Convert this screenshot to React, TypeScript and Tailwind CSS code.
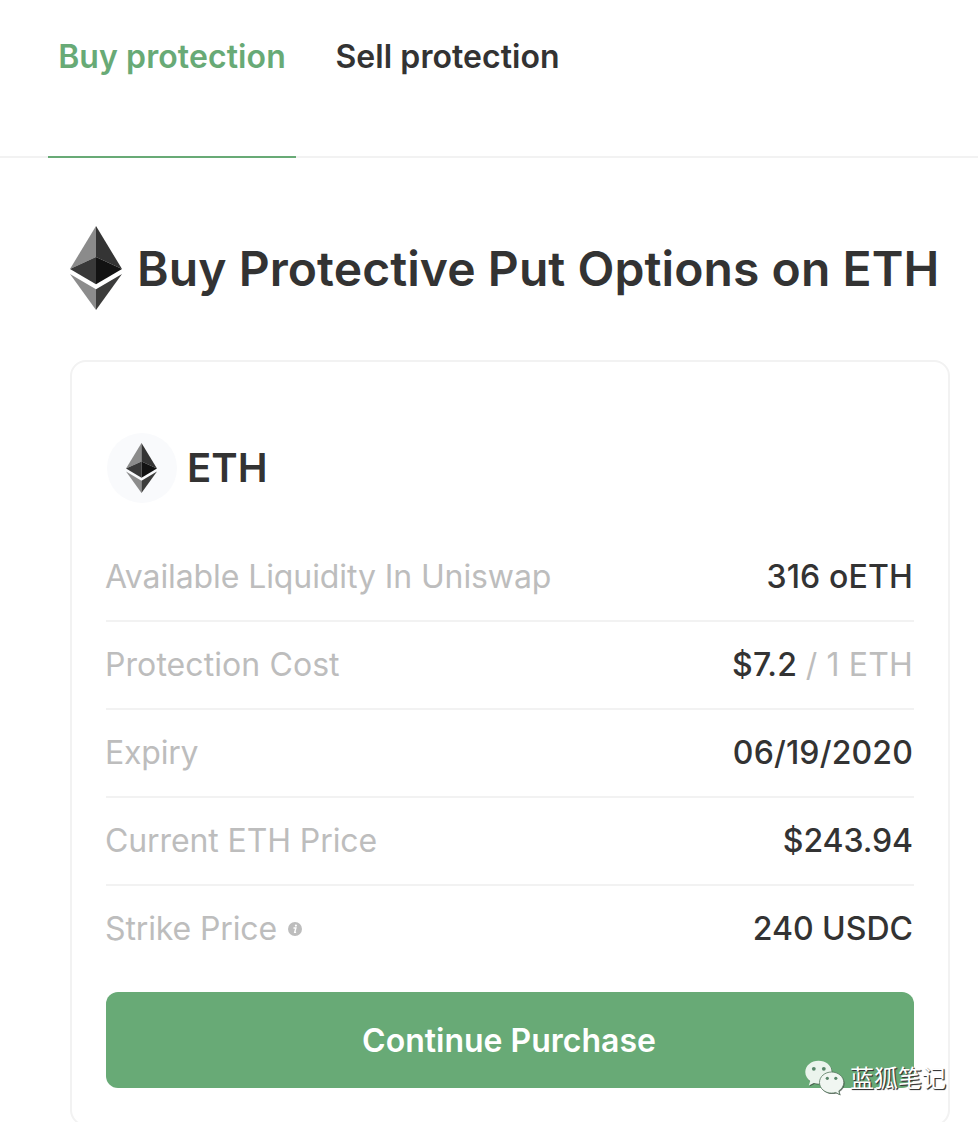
import type { ReactNode } from "react";

function EthLogo({ className }: { className: string }) {
  return (
    <svg viewBox="0 0 52 84" className={className} aria-hidden="true">
      <path d="M26 0 0 43l26-12z" fill="#8b8b8b" />
      <path d="M26 0v31l26 12z" fill="#343434" />
      <path d="M0 43l26 15.3V31z" fill="#393939" />
      <path d="M26 31v27.3L52 43z" fill="#121212" />
      <path d="M0 48l26 36V63.3z" fill="#8c8c8c" />
      <path d="M26 63.3V84l26-36z" fill="#3c3c3b" />
    </svg>
  );
}

function InfoIcon() {
  return (
    <svg viewBox="0 0 14 14" className="ml-[11px] size-3.5" aria-hidden="true">
      <circle cx="7" cy="7" r="7" fill="#bdbdbd" />
      <circle cx="7.9" cy="3.6" r="1.1" fill="#fff" />
      <path d="M5.5 6h2.4L6.7 10.4h1.4" fill="none" stroke="#fff" strokeWidth="1.4" />
    </svg>
  );
}

function Row({ label, children, last = false }: { label: ReactNode; children: ReactNode; last?: boolean }) {
  return (
    <div
      className={
        last
          ? "flex h-[86px] items-center justify-between"
          : "flex h-[88px] items-center justify-between border-b-2 border-[#f2f2f2]"
      }
    >
      <dt className="-ml-px flex items-center text-[#bdbdbd]">{label}</dt>
      <dd className="pr-px font-medium tracking-[0.15px] text-[#333]">{children}</dd>
    </div>
  );
}

const BIG_BUBBLE =
  "M15.5 2.8C8.4 2.8 2.3 7.6 2.3 14c0 3.800 1.900 6.800 4.900 8.900L5.800 27.600l5-2.600c1.600.4 3 .7 4.700.7 7.200 0 13.200-5 13.200-11.700S22.700 2.800 15.500 2.800Z";
const SMALL_BUBBLE =
  "M28.500 14C22 14 16.500 18.500 16.500 24.500s5.500 10.600 12 10.600c1.500 0 2.800-.3 4.200-.6l4.200 2.200-1.100-3.800c3-2 5-5 5-8.400C40.800 18.500 35 14 28.500 14Z";

function Watermark() {
  return (
    <div className="absolute top-[1058px] left-[803px] flex items-start">
      <svg viewBox="0 0 44 40" className="h-10 w-11 shrink-0" aria-hidden="true">
        <g fill="#3f4a42" fillOpacity="0.75" transform="translate(0.8 0.9)">
          <path d={BIG_BUBBLE} />
          <path d={SMALL_BUBBLE} />
        </g>
        <path d={BIG_BUBBLE} fill="#ebf4ed" />
        <path d={SMALL_BUBBLE} fill="#f0f6f1" stroke="#55775e" strokeWidth="0.8" />
        <g fill="#59866a">
          <circle cx="10.8" cy="10.8" r="1.9" />
          <circle cx="20.8" cy="10.8" r="1.9" />
          <circle cx="24.3" cy="20.3" r="1.6" />
          <circle cx="32.8" cy="20.3" r="1.6" />
        </g>
      </svg>
      <span className="-mt-px ml-[3px] font-['Noto_Sans_CJK_SC',sans-serif] text-[24px] leading-10 whitespace-nowrap text-white [text-shadow:1px_1px_1px_#333,1px_1px_0_#555]">
        蓝狐笔记
      </span>
    </div>
  );
}

export default function App() {
  return (
    <div className="relative h-[1122px] w-[978px] overflow-hidden bg-white font-[Inter,sans-serif] text-[32px] leading-10 text-[#333]">
      <nav className="flex h-[158px] items-stretch border-b-2 border-[#f2f2f2] pl-12 font-semibold">
        <button className="-mb-0.5 flex w-[248px] items-start justify-center border-b-2 border-[#68aa76] pt-[37px] tracking-[0.1px] whitespace-nowrap text-[#68aa76]">
          Buy protection
        </button>
        <button className="-mb-0.5 flex items-start pt-[37px] pl-[39.5px] tracking-[0.06px] whitespace-nowrap">
          Sell protection
        </button>
      </nav>

      <main className="pt-[68px] pl-[70px]">
        <header className="flex h-[84px] items-center">
          <EthLogo className="h-[84px] w-[52px] shrink-0" />
          <h1 className="mt-0.5 ml-[15px] text-[48px] leading-[60px] font-semibold tracking-[0.08px] whitespace-nowrap">
            Buy Protective Put Options on ETH
          </h1>
        </header>

        <section className="mt-[50px] w-[880px] rounded-2xl border-2 border-[#f2f2f2] px-[34px] pt-[71px] pb-9">
          <div className="flex h-[70px] items-center pl-px">
            <div className="flex size-[70px] items-center justify-center rounded-full bg-[#f9fafc] pr-px">
              <EthLogo className="h-[50px] w-[31px]" />
            </div>
            <h2 className="ml-2.5 text-[40px] leading-[50px] font-semibold">ETH</h2>
          </div>

          <dl className="mt-[31px]">
            <Row label={<span className="tracking-[-0.1px]">Available Liquidity In Uniswap</span>}>316 oETH</Row>
            <Row label={<span className="tracking-[0.08px]">Protection Cost</span>}>
              $7.2 <span className="font-normal text-[#bdbdbd]">/ 1 ETH</span>
            </Row>
            <Row label={<span className="tracking-[-0.2px]">Expiry</span>}>06/19/2020</Row>
            <Row label={<span className="tracking-[-0.1px]">Current ETH Price</span>}>
              <span className="tracking-[-0.1px]">$243.94</span>
            </Row>
            <Row
              last
              label={
                <>
                  <span className="tracking-[-0.12px]">Strike Price</span>
                  <InfoIcon />
                </>
              }
            >
              <span className="tracking-normal">240 USDC</span>
            </Row>
          </dl>

          <button className="mt-5 flex h-24 w-full items-center justify-center rounded-xl bg-[#68aa76] pt-0.5 pr-0.5 font-semibold text-white">
            Continue Purchase
          </button>
        </section>
      </main>

      <Watermark />
    </div>
  );
}
